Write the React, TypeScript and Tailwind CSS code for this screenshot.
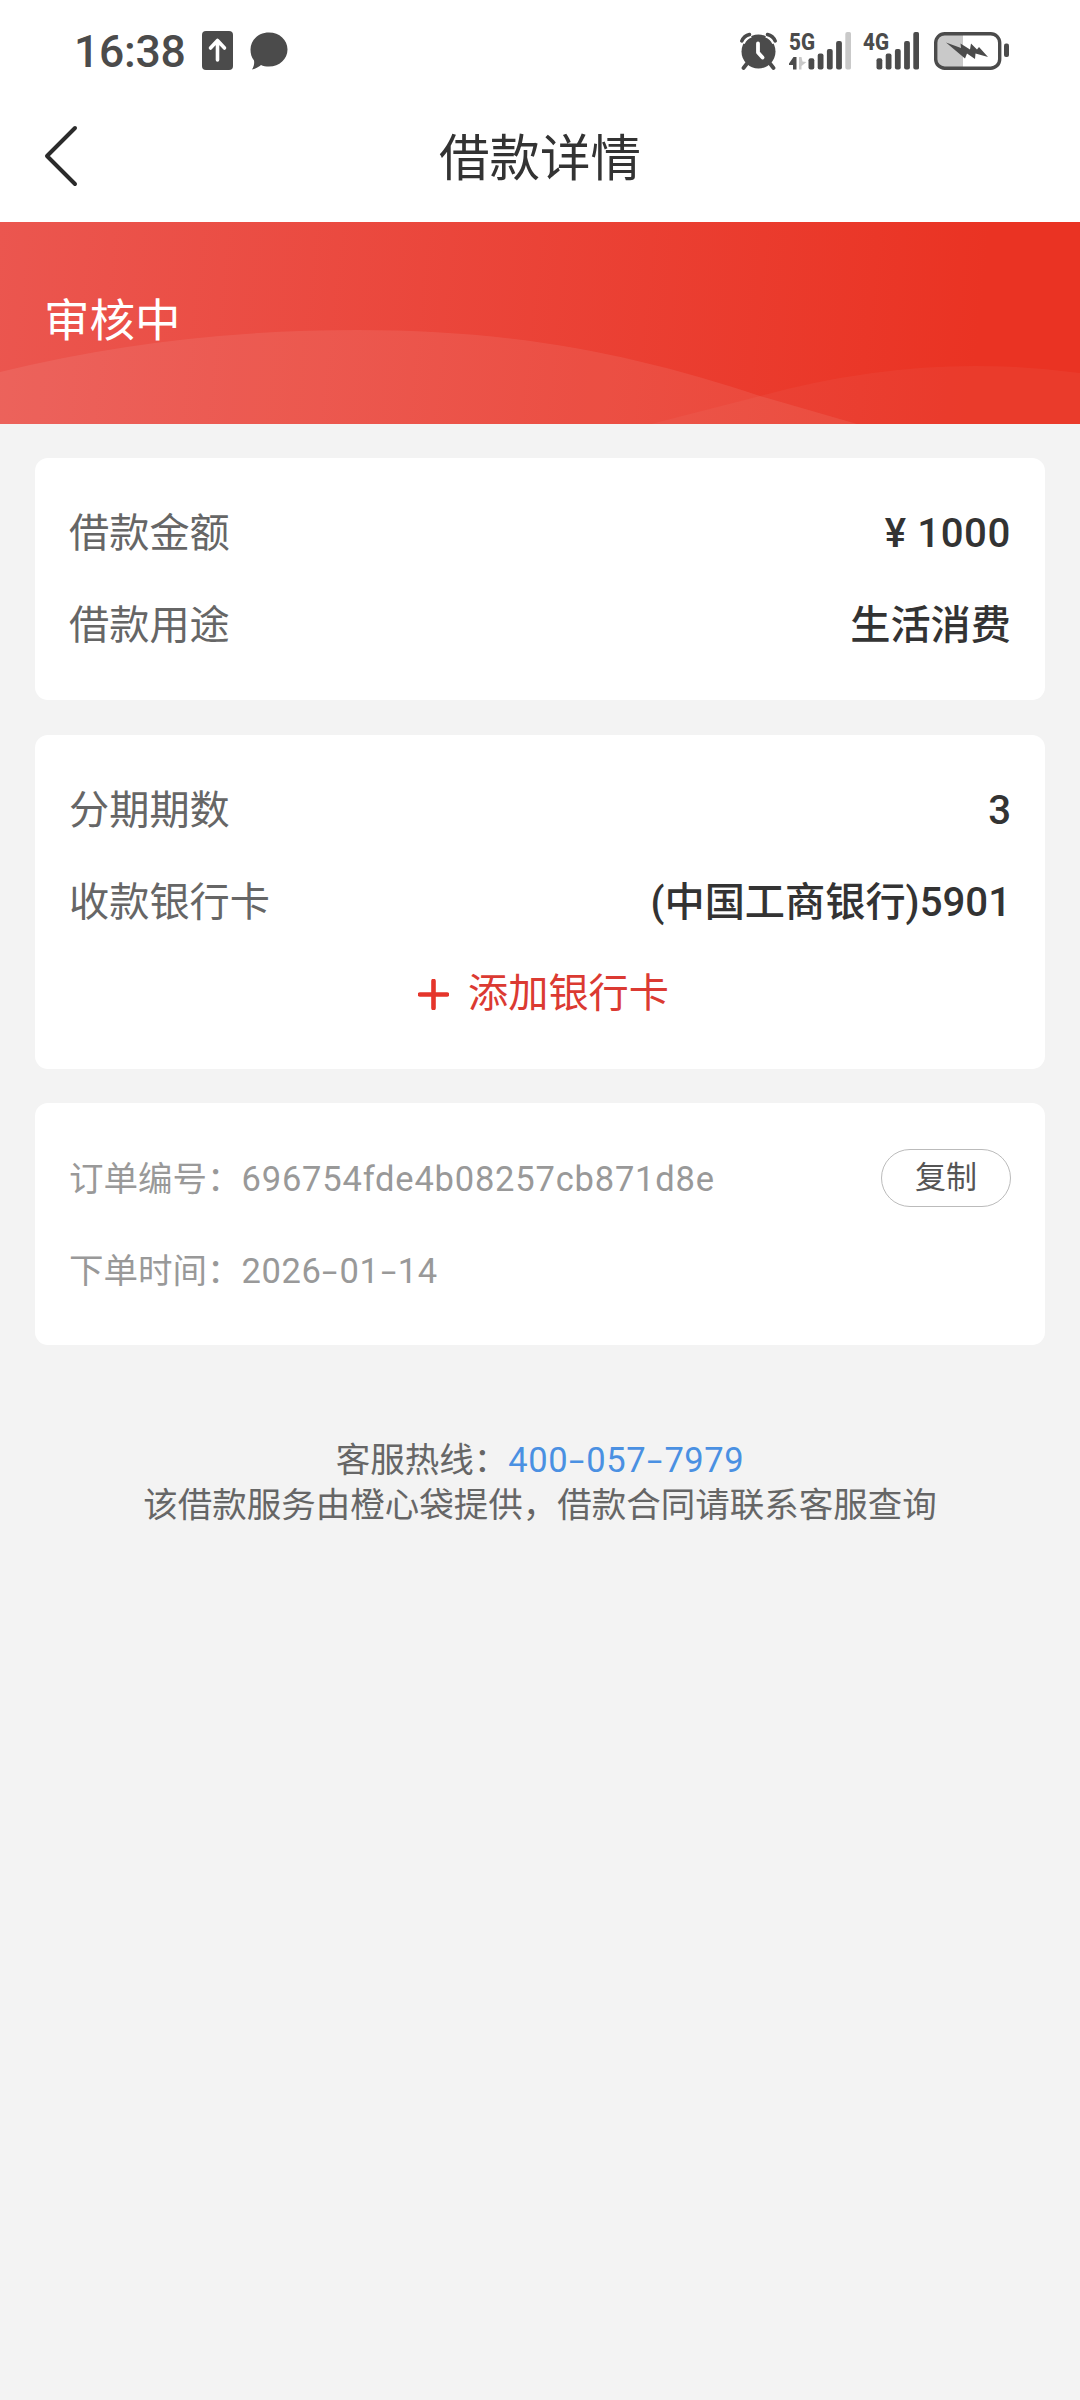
import React from "react";

const loanRows = [
  { label: "借款金额", value: "¥ 1000", numeric: true },
  { label: "借款用途", value: "生活消费", numeric: false },
];

function AlarmIcon() {
  return (
    <svg width="38" height="38" viewBox="0 0 38 38" fill="#4b4b4b">
      <circle cx="18.500" cy="19.500" r="17" />
      <path d="M1.500 10.500 A15 15 0 0 1 10.500 2.200 M26.500 2.200 A15 15 0 0 1 35.500 10.500" stroke="#fff" strokeWidth="7" fill="none" />
      <path d="M1.800 9 A11 11 0 0 1 9.500 2.500 M27.500 2.500 A11 11 0 0 1 35.200 9" stroke="#4b4b4b" strokeWidth="3.400" fill="none" strokeLinecap="round" />
      <path d="M7 31.500 L3.500 36 M30 31.500 L33.500 36" stroke="#4b4b4b" strokeWidth="3.800" strokeLinecap="round" />
      <path d="M18 11.500 V20.500 L22.500 25.500" stroke="#fff" strokeWidth="3.800" strokeLinecap="round" strokeLinejoin="round" fill="none" />
    </svg>
  );
}

function SignalIcon({ label, left, weak }: { label: string; left: number; weak?: boolean }) {
  const tops = [26.3, 21.5, 17, 9, 0];
  return (
    <svg width={left + 42.5} height="50" viewBox={`0 -6 ${left + 42.5} 50`} fill="#4b4b4b">
      <text x="0" y="18" fontSize="24.5" fontWeight="800" fontFamily="Roboto, sans-serif" textLength="26" lengthAdjust="spacingAndGlyphs">
        {label}
      </text>
      {tops.map((top, i) => (
        <rect key={top} x={left + i * 9.2} y={top} width="5.8" height={37.5 - top} rx="2" fill={weak && i === 4 ? "#c9c9c9" : "#4b4b4b"} />
      ))}
      {weak && (
        <>
          <path d="M0 31.500 L4.500 25 H7.500 V37.500 H4 V33 H0 Z" />
          <path d="M10 25 L12.500 25 L13.500 29.500 L17.500 30 L12.500 34 L12.500 37.500 H10 Z" fill="#c9c9c9" />
        </>
      )}
    </svg>
  );
}

function BatteryIcon() {
  return (
    <svg width="76" height="38" viewBox="0 0 76 38">
      <path d="M10 2 H29 V36 H10 A8 8 0 0 1 2 28 V10 A8 8 0 0 1 10 2 Z" fill="#c9c9c9" />
      <rect x="1.700" y="1.700" width="64" height="34.500" rx="9" fill="none" stroke="#4b4b4b" strokeWidth="3.400" />
      <rect x="70" y="11.500" width="5" height="13.500" rx="2" fill="#4b4b4b" />
      <path d="M12 10.500 L27 16 L26.500 11.500 L36 17.500 L37 11.500 L43 17.500 L45 15 L54 25 L41.500 21.500 L41 27 L33 21.500 L31 26.500 Z" fill="#4b4b4b" />
    </svg>
  );
}

function StatusBar() {
  return (
    <div className="flex h-[102px] items-center justify-between pr-[70px] pl-[74px] text-[#4b4b4b]">
      <div className="flex items-center">
        <span className="w-[128px] pt-[2px] text-[44.5px] leading-none font-medium tracking-[-0.3px]">16:38</span>
        <svg width="31" height="40" viewBox="0 0 31 40">
          <rect width="31" height="39" rx="4" fill="#4b4b4b" />
          <path d="M15.500 29 V10 M8.500 17 L15.500 9.500 L22.500 17" stroke="#fff" strokeWidth="3.600" strokeLinecap="round" strokeLinejoin="round" fill="none" />
        </svg>
        <svg className="ml-[17px]" width="38" height="38" viewBox="0 0 38 38" fill="#4b4b4b">
          <path d="M19 0.500 C29.500 0.500 37.500 8 37.500 17.500 C37.500 27 29.500 34.500 19 34.500 C16 34.500 13 34 11 33 C8.500 35 5 37 2 37.500 C4 34.500 4.500 31 4 28.500 C1.500 25.500 0.500 21.500 0.500 17.500 C0.500 8 8.500 0.500 19 0.500 Z" />
        </svg>
      </div>
      <div className="flex items-center">
        <AlarmIcon />
        <div className="ml-[11px]">
          <SignalIcon label="5G" left={19.5} weak />
        </div>
        <div className="ml-[12px]">
          <SignalIcon label="4G" left={13.5} />
        </div>
        <div className="ml-[15px]">
          <BatteryIcon />
        </div>
      </div>
    </div>
  );
}

function Header() {
  return (
    <header className="grid h-[120px] grid-cols-3 items-center px-[44px] pb-[12px]">
      <svg width="34" height="62" viewBox="0 0 34 62" aria-label="返回">
        <path d="M31 3 L3 31 L31 59" fill="none" stroke="#2b2b2b" strokeWidth="4" strokeLinecap="round" strokeLinejoin="round" />
      </svg>
      <h1 className="pt-[6px] text-center text-[50.5px] leading-none whitespace-nowrap text-[#333]">借款详情</h1>
    </header>
  );
}

function Banner() {
  return (
    <section className="relative flex h-[202px] items-center overflow-hidden bg-linear-[96deg] from-[#eb564f] to-[#ea3323] to-90% pb-[3px] pl-[44px]">
      <svg className="absolute inset-0" width="1080" height="202" viewBox="0 0 1080 202" fill="#fff">
        <path d="M0 150 Q170 108 358 108 C520 108 640 134 760 174 L857 202 H0 Z" fillOpacity="0.08" />
        <path d="M651 202 L760 174 Q870 144 975 144 Q1030 144 1080 151 V202 Z" fillOpacity="0.04" />
      </svg>
      <span className="relative text-[45.5px] leading-none text-white">审核中</span>
    </section>
  );
}

function Card({ children }: { children: React.ReactNode }) {
  return <section className="rounded-[13px] bg-white px-[34px] py-[29px]">{children}</section>;
}

function Row({ label, value, numeric }: { label: string; value: string; numeric?: boolean }) {
  return (
    <div className="flex h-[92px] items-center justify-between pt-[3px] text-[40.2px]">
      <span className="text-[#666]">{label}</span>
      <span className={numeric ? "font-medium tracking-[0.6px] text-[#333]" : "font-medium text-[#333]"}>{value}</span>
    </div>
  );
}

// digits with wide hyphens, for dates and phone numbers
function Dashed({ text }: { text: string }) {
  return (
    <span className="tracking-[0.6px]">
      {text.split("-").map((part, i) => (
        <React.Fragment key={i}>
          {i > 0 && <span className="mx-[4px] inline-block scale-x-160">-</span>}
          {part}
        </React.Fragment>
      ))}
    </span>
  );
}

export default function App() {
  return (
    <div className="h-[2400px] w-[1080px] overflow-hidden bg-[#f3f3f3] font-[Roboto,'Noto_Sans_CJK_SC',sans-serif]">
      <div className="bg-white">
        <StatusBar />
        <Header />
      </div>
      <Banner />

      <main className="flex flex-col gap-[34.5px] px-[35px] pt-[34px]">
        <Card>
          {loanRows.map((row) => (
            <Row key={row.label} {...row} />
          ))}
        </Card>

        <Card>
          <Row label="分期期数" value="3" />
          <Row label="收款银行卡" value="(中国工商银行)5901" />
          <button className="flex h-[92px] w-full items-center justify-center gap-[19px] pt-[1px] pl-[7px] text-[40.2px] text-[#db3a32]">
            <svg width="31" height="31" viewBox="0 0 31 31">
              <path d="M15.500 2 V29 M2 15.500 H29" stroke="#e5352b" strokeWidth="4.600" strokeLinecap="round" />
            </svg>
            添加银行卡
          </button>
        </Card>

        <Card>
          <div className="flex h-[92px] items-center text-[34.5px] text-[#999]">
            <span className="pt-[3px]">订单编号：</span>
            <span className="pt-[3px] tracking-[0.8px]">696754fde4b08257cb871d8e</span>
            <button className="ml-auto flex h-[58px] w-[130px] items-center justify-center rounded-full border border-[#bbb] text-[31px] text-[#555]">
              复制
            </button>
          </div>
          <div className="flex h-[92px] items-center pt-[3px] text-[34.5px] text-[#999]">
            <span>下单时间：</span>
            <Dashed text="2026-01-14" />
          </div>
        </Card>
      </main>

      <footer className="pt-[93px] text-center text-[34.5px] leading-[45px] text-[#666]">
        <p>
          客服热线：
          <a className="text-[#4a90e2]">
            <Dashed text="400-057-7979" />
          </a>
        </p>
        <p>该借款服务由橙心袋提供，借款合同请联系客服查询</p>
      </footer>
    </div>
  );
}
